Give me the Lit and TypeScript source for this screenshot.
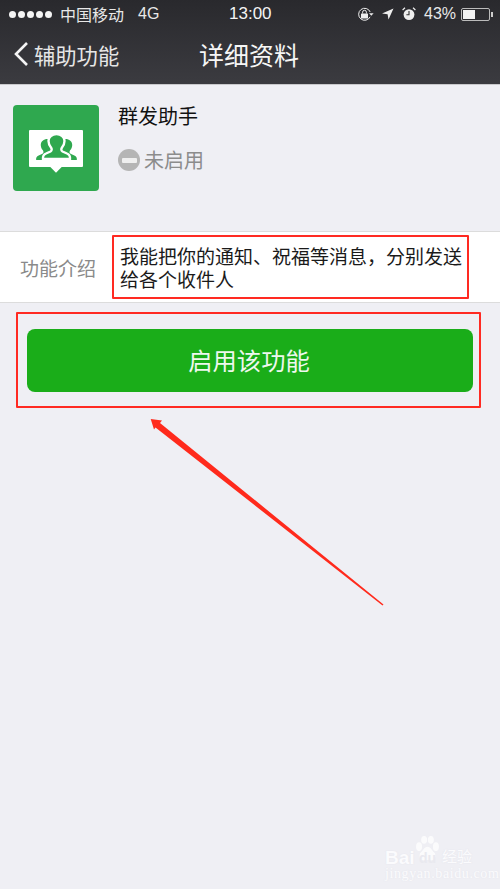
import { css, html, LitElement, svg } from 'lit';
import { customElement } from 'lit/decorators.js';

const PERSON =
  'M-13.500 25c-.3-3 .5-4.500 3-5.500l4.500-2c1.500-.8 1.500-2.500.5-4C-7.500 11-8 8.500-8 7-8 3-4.500 0 0 0s8 3 8 7c0 1.500-.5 4-2.500 6.500-1 1.500-1 3.200.5 4l4.500 2c2.500 1 3.300 2.500 3 5.500z';

@customElement('app-root')
export class AppRoot extends LitElement {
  private person(transform: string, outlined = false) {
    return svg`<path
      d=${PERSON}
      transform=${transform}
      fill="#2fa84f"
      stroke=${outlined ? '#fff' : 'none'}
      stroke-width=${outlined ? 2.4 : 0}
    />`;
  }

  protected render() {
    return html`
      <div class="top">
        <div class="status">
          <div class="dots">${[0, 1, 2, 3, 4].map(() => html`<i></i>`)}</div>
          <span class="carrier">中国移动</span>
          <span class="net">4G</span>
          <span class="time">13:00</span>
          <div class="status-right">
            <svg width="16" height="15" viewBox="0 0 16 15">
              <path d="M12.100 9.800A6 6 0 1 1 12.200 5" fill="none" stroke="#eee" stroke-width="1" />
              <path d="M11 6.200h4.600l-2.300 2.600z" fill="#eee" />
              <rect x="3" y="6.500" width="7" height="5" rx=".6" fill="#eee" />
              <path d="M4.600 6.500V5.200a1.900 1.900 0 0 1 3.800 0v1.300" fill="none" stroke="#eee" stroke-width="1" />
            </svg>
            <svg class="loc" width="12" height="12" viewBox="0 0 12 12">
              <path d="M11.500.5 0 5.600l5.600.7.9 5.200z" fill="#eee" />
            </svg>
            <svg class="alarm" width="14" height="14" viewBox="0 0 14 14">
              <circle cx="7" cy="7.600" r="5.400" fill="#eee" />
              <path d="M7 4v3.800H4.400" fill="none" stroke="#333" stroke-width="1.100" />
              <path d="M.6 3 3 .8M13.400 3 11 .8" stroke="#eee" stroke-width="1.200" />
            </svg>
            <span class="pct">43%</span>
            <div class="battery"><b></b></div>
            <div class="nub"></div>
          </div>
        </div>
        <div class="nav">
          <div class="back">
            <svg width="16" height="26" viewBox="0 0 16 26">
              <path d="M14 2 3 13l11 11" fill="none" stroke="#f4f4f4" stroke-width="2.600" />
            </svg>
            <span>辅助功能</span>
          </div>
          <div class="title">详细资料</div>
        </div>
      </div>

      <div class="profile">
        <div class="logo">
          <div class="bubble">
            <svg width="54" height="37" viewBox="0 0 54 37">
              ${this.person('translate(18.500 9) scale(.84)')}
              ${this.person('translate(36.500 9) scale(.84)')}
              ${this.person('translate(27.500 4)', true)}
            </svg>
          </div>
        </div>
        <div class="info">
          <div class="name">群发助手</div>
          <div class="state">
            <div class="off"><i></i></div>
            <span>未启用</span>
          </div>
        </div>
      </div>

      <div class="row">
        <div class="label">功能介绍</div>
        <div class="desc mark">我能把你的通知、祝福等消息\uFF0C分别发送给各个收件人</div>
      </div>

      <div class="action mark">
        <div class="btn">启用该功能</div>
      </div>

      <svg class="arrow" width="500" height="889" viewBox="0 0 500 889">
        <path d="M150.700 419 162 420.500 160 423 383.500 604.500 382.500 605.500 155.500 427.500 154 429.500z" fill="#ff2a1c" />
      </svg>

      <div class="wm">
        <svg width="27" height="29" viewBox="0 0 32 30" preserveAspectRatio="none">
          <g fill="#fff" opacity=".8">
            <ellipse cx="6" cy="11" rx="3.500" ry="4.500" />
            <ellipse cx="12" cy="4" rx="3.500" ry="4" />
            <ellipse cx="20" cy="4" rx="3.500" ry="4" />
            <ellipse cx="26" cy="11" rx="3.500" ry="4.500" />
            <path d="M16 11c4 0 5 4 8 6 3 3 1 9-4 8-2-.4-6-.4-8 0-5 1-7-5-4-8 3-2 4-6 8-6z" />
          </g>
        </svg>
        <span class="bai">Bai</span>
        <span class="du">du</span>
        <span class="jy">经验</span>
        <div class="url">jingyan.baidu.com</div>
      </div>
    `;
  }

  static styles = css`
    :host {
      display: block;
      position: relative;
      width: 500px;
      height: 889px;
      overflow: hidden;
      background: #efeff4;
      font-family: 'Noto Sans CJK SC', 'Liberation Sans', sans-serif;
    }

    .top {
      height: 85px;
      box-sizing: border-box;
      background: linear-gradient(#29292d, #3b3b40);
      border-bottom: 1px solid #c9c9cc;
      color: #f4f4f4;
    }

    .status {
      position: relative;
      display: flex;
      align-items: center;
      height: 28px;
      padding-left: 9px;
      font-size: 16px;
      color: #e8e8e8;
    }

    .dots {
      display: flex;
      gap: 2px;
      margin-right: 8px;
    }

    .dots i {
      width: 7px;
      height: 7px;
      border-radius: 50%;
      background: #f4f4f4;
    }

    .carrier {
      width: 65px;
      font-size: 16px;
    }

    .net {
      margin-left: 13px;
      font-family: 'Liberation Sans', sans-serif;
    }

    .time {
      position: absolute;
      left: 229px;
      font-family: 'Liberation Sans', sans-serif;
      font-size: 17px;
      color: #f4f4f4;
    }

    .status-right {
      position: absolute;
      left: 358px;
      display: flex;
      align-items: center;
    }

    .loc {
      margin-left: 8px;
    }

    .alarm {
      margin-left: 8px;
    }

    .pct {
      margin-left: 8px;
      font-family: 'Liberation Sans', sans-serif;
      font-size: 16px;
    }

    .battery {
      box-sizing: border-box;
      width: 29px;
      height: 13px;
      margin-left: 5px;
      padding: 1px;
      border: 1px solid #bbb;
      border-radius: 2px;
    }

    .battery b {
      display: block;
      width: 12px;
      height: 100%;
      background: #f2f2f2;
    }

    .nub {
      width: 2px;
      height: 5px;
      margin-left: 1px;
      background: #ccc;
    }

    .nav {
      position: relative;
      display: flex;
      align-items: center;
      justify-content: center;
      height: 52px;
      padding-right: 2px;
    }

    .back {
      position: absolute;
      left: 13px;
      display: flex;
      align-items: center;
      gap: 5px;
      font-size: 21.300px;
      color: #e6e6e6;
    }

    .title {
      font-size: 25px;
      color: #f6f6f6;
    }

    .profile {
      display: flex;
      gap: 19px;
      padding: 20px 13px 0;
      height: 146px;
      box-sizing: border-box;
    }

    .logo {
      display: flex;
      align-items: center;
      justify-content: center;
      width: 86px;
      height: 86px;
      border-radius: 4px;
      background: #2fa84f;
    }

    .bubble {
      position: relative;
      width: 54px;
      height: 37px;
      border-radius: 1px;
      background: #fff;
    }

    .bubble::after {
      content: '';
      position: absolute;
      left: 23px;
      bottom: -4px;
      width: 8px;
      height: 8px;
      background: #fff;
      transform: rotate(45deg);
    }

    .bubble svg {
      display: block;
      position: relative;
      z-index: 1;
    }

    .info {
      margin-top: -1px;
    }

    .name {
      height: 24px;
      font-size: 20px;
      line-height: 24px;
      color: #111;
    }

    .state {
      display: flex;
      align-items: center;
      gap: 4px;
      margin-top: 20px;
      font-size: 20px;
      line-height: 24px;
      color: #8c8c8c;
    }

    .off {
      display: flex;
      align-items: center;
      justify-content: center;
      width: 22px;
      height: 22px;
      border-radius: 50%;
      background: #b5b5b5;
    }

    .off i {
      width: 15px;
      height: 5px;
      border-radius: 1px;
      background: #efefef;
    }

    .row {
      display: flex;
      align-items: center;
      box-sizing: border-box;
      height: 72px;
      padding-left: 20px;
      background: #fff;
      border-top: 1px solid #dcdcdc;
      border-bottom: 1px solid #dcdcdc;
    }

    .label {
      width: 92px;
      font-size: 19px;
      color: #8a8a8a;
    }

    .mark {
      box-sizing: border-box;
      border: 2px solid #ff2a22;
      border-radius: 1px;
    }

    .desc {
      width: 357px;
      height: 64px;
      padding: 7px 4px 0 6px;
      font-size: 19px;
      line-height: 23px;
      color: #1a1a1a;
    }

    .action {
      width: 465px;
      height: 96px;
      margin: 9px 0 0 16px;
      padding: 15px 6px 0 9px;
    }

    .btn {
      display: flex;
      align-items: center;
      justify-content: center;
      box-sizing: border-box;
      height: 63px;
      padding: 0 2px 2px 0;
      border-radius: 8px;
      background: #1aad19;
      font-size: 24.300px;
      color: #eef8ee;
    }

    .arrow {
      position: absolute;
      left: 0;
      top: 0;
      pointer-events: none;
    }

    .wm {
      position: absolute;
      left: 385px;
      top: 834px;
      width: 115px;
      height: 55px;
      color: #fbfbfd;
      text-shadow: 0 0 1px rgba(215, 215, 225, 0.5);
    }

    .wm svg {
      position: absolute;
      left: 29px;
      top: 2px;
    }

    .wm span {
      position: absolute;
      line-height: 1;
    }

    .bai {
      left: 0;
      top: 14px;
      font-family: 'Liberation Sans', sans-serif;
      font-size: 19px;
      font-weight: 700;
    }

    .wm .du {
      left: 34px;
      top: 17px;
      font-family: 'Liberation Sans', sans-serif;
      font-size: 14px;
      font-weight: 700;
      color: #e9e9ef;
      text-shadow: none;
    }

    .wm .jy {
      left: 57px;
      top: 14px;
      font-size: 15px;
    }

    .url {
      position: absolute;
      left: 0;
      top: 32px;
      font-family: 'Liberation Serif', serif;
      font-size: 14px;
      letter-spacing: 0.600px;
      white-space: nowrap;
    }
  `;
}

declare global {
  interface HTMLElementTagNameMap {
    'app-root': AppRoot;
  }
}
